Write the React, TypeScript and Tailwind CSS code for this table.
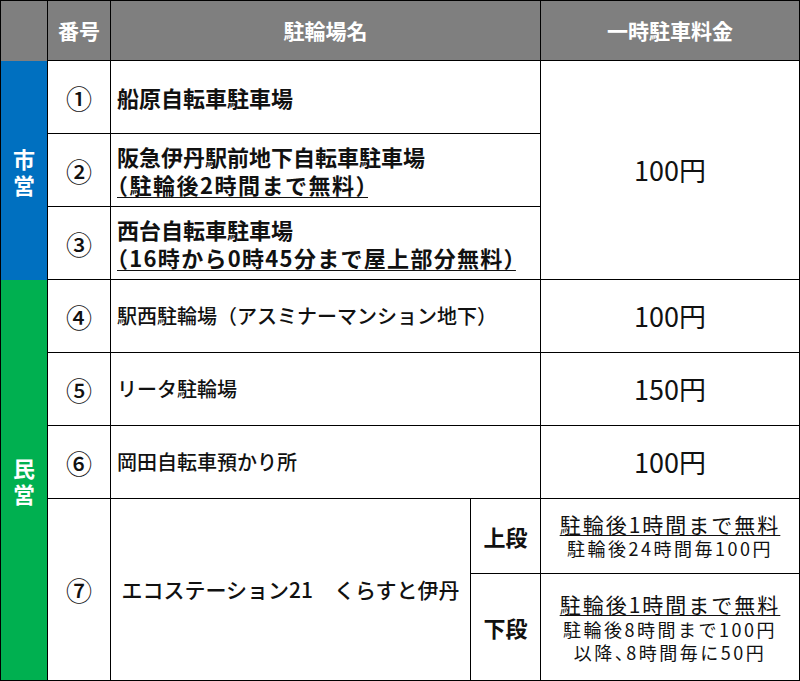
const font = "font-['Noto_Sans_CJK_JP','Noto_Sans',sans-serif]";

const headCell =
  "bg-[#7f7f7f] text-white text-[21px] font-bold flex items-center justify-center border-r border-b border-black";
const cell = "bg-white border-r border-b border-black flex items-center";

export default function App() {
  return (
    <div className={`w-[800px] bg-white ${font}`}>
      <div className="grid grid-cols-[47px_63px_360px_70px_259px] grid-rows-[60px_73px_73px_73px_73px_73px_73px_75px_107px] border-t border-l border-black text-[#111]">
        {/* header */}
        <div className="col-start-1 row-start-1 bg-[#7f7f7f] border-r border-black" />
        <div className={`col-start-2 row-start-1 ${headCell}`}>番号</div>
        <div className={`col-start-3 col-span-2 row-start-1 ${headCell}`}>駐輪場名</div>
        <div className={`col-start-5 row-start-1 ${headCell}`}>一時駐車料金</div>

        {/* side labels */}
        <div className="col-start-1 row-start-2 row-span-3 bg-[#0070c0] border-r border-black flex items-center justify-center text-white text-[22px] font-bold leading-[26px] text-center">
          <span>
            市<br />営
          </span>
        </div>
        <div className="col-start-1 row-start-5 row-span-5 bg-[#00b050] border-r border-b border-black flex items-center justify-center text-white text-[22px] font-bold leading-[26px] text-center">
          <span>
            民<br />営
          </span>
        </div>

        {/* numbers */}
        {["①", "②", "③", "④", "⑤", "⑥"].map((n, i) => (
          <div
            key={n}
            className={`col-start-2 ${cell} justify-center text-[26px] font-medium`}
            style={{ gridRowStart: i + 2 }}
          >
            {n}
          </div>
        ))}
        <div className={`col-start-2 row-start-8 row-span-2 ${cell} justify-center text-[26px] font-medium`}>⑦</div>

        {/* names */}
        <div className={`col-start-3 col-span-2 row-start-2 ${cell} pl-[6px] text-[22px] font-bold`}>
          船原自転車駐車場
        </div>
        <div className={`col-start-3 col-span-2 row-start-3 ${cell} pl-[6px] text-[22px] font-bold leading-[28px]`}>
          <div>
            <div>阪急伊丹駅前地下自転車駐車場</div>
            <div className="underline underline-offset-[3px] decoration-1 tracking-[1.5px] [font-feature-settings:'halt']">
              （駐輪後2時間まで無料）
            </div>
          </div>
        </div>
        <div className={`col-start-3 col-span-2 row-start-4 ${cell} pl-[6px] text-[22px] font-bold leading-[28px]`}>
          <div>
            <div>西台自転車駐車場</div>
            <div className="underline underline-offset-[3px] decoration-1 tracking-[1.3px] [font-feature-settings:'halt']">
              （16時から0時45分まで屋上部分無料）
            </div>
          </div>
        </div>
        <div className={`col-start-3 col-span-2 row-start-5 ${cell} pl-[6px] text-[20px] font-medium`}>
          駅西駐輪場（アスミナーマンション地下）
        </div>
        <div className={`col-start-3 col-span-2 row-start-6 ${cell} pl-[6px] text-[20px] font-medium`}>
          リータ駐輪場
        </div>
        <div className={`col-start-3 col-span-2 row-start-7 ${cell} pl-[6px] text-[20px] font-medium`}>
          岡田自転車預かり所
        </div>
        <div className={`col-start-3 row-start-8 row-span-2 ${cell} justify-center text-[21px] font-medium whitespace-pre`}>
          {"エコステーション21　くらすと伊丹"}
        </div>
        <div className={`col-start-4 row-start-8 ${cell} justify-center text-[22px] font-bold`}>上段</div>
        <div className={`col-start-4 row-start-9 ${cell} justify-center text-[22px] font-bold`}>下段</div>

        {/* prices */}
        <div className={`col-start-5 row-start-2 row-span-3 ${cell} justify-center text-[27px]`}>100円</div>
        <div className={`col-start-5 row-start-5 ${cell} justify-center text-[27px]`}>100円</div>
        <div className={`col-start-5 row-start-6 ${cell} justify-center text-[27px]`}>150円</div>
        <div className={`col-start-5 row-start-7 ${cell} justify-center text-[27px]`}>100円</div>
        <div className={`col-start-5 row-start-8 ${cell} justify-center`}>
          <div className="flex flex-col items-center">
            <div className="text-[21px] tracking-[2px] leading-[25px] underline underline-offset-[2px] decoration-1">
              駐輪後1時間まで無料
            </div>
            <div className="text-[18px] tracking-[2.5px] leading-[23px]">駐輪後24時間毎100円</div>
          </div>
        </div>
        <div className={`col-start-5 row-start-9 ${cell} justify-center`}>
          <div className="flex flex-col items-center">
            <div className="text-[21px] tracking-[2px] leading-[27px] underline underline-offset-[2px] decoration-1">
              駐輪後1時間まで無料
            </div>
            <div className="text-[18px] tracking-[2.5px] leading-[23px]">駐輪後8時間まで100円</div>
            <div className="text-[18px] tracking-[2.5px] leading-[23px] [font-feature-settings:'halt']">
              以降、8時間毎に50円
            </div>
          </div>
        </div>
      </div>
    </div>
  );
}
